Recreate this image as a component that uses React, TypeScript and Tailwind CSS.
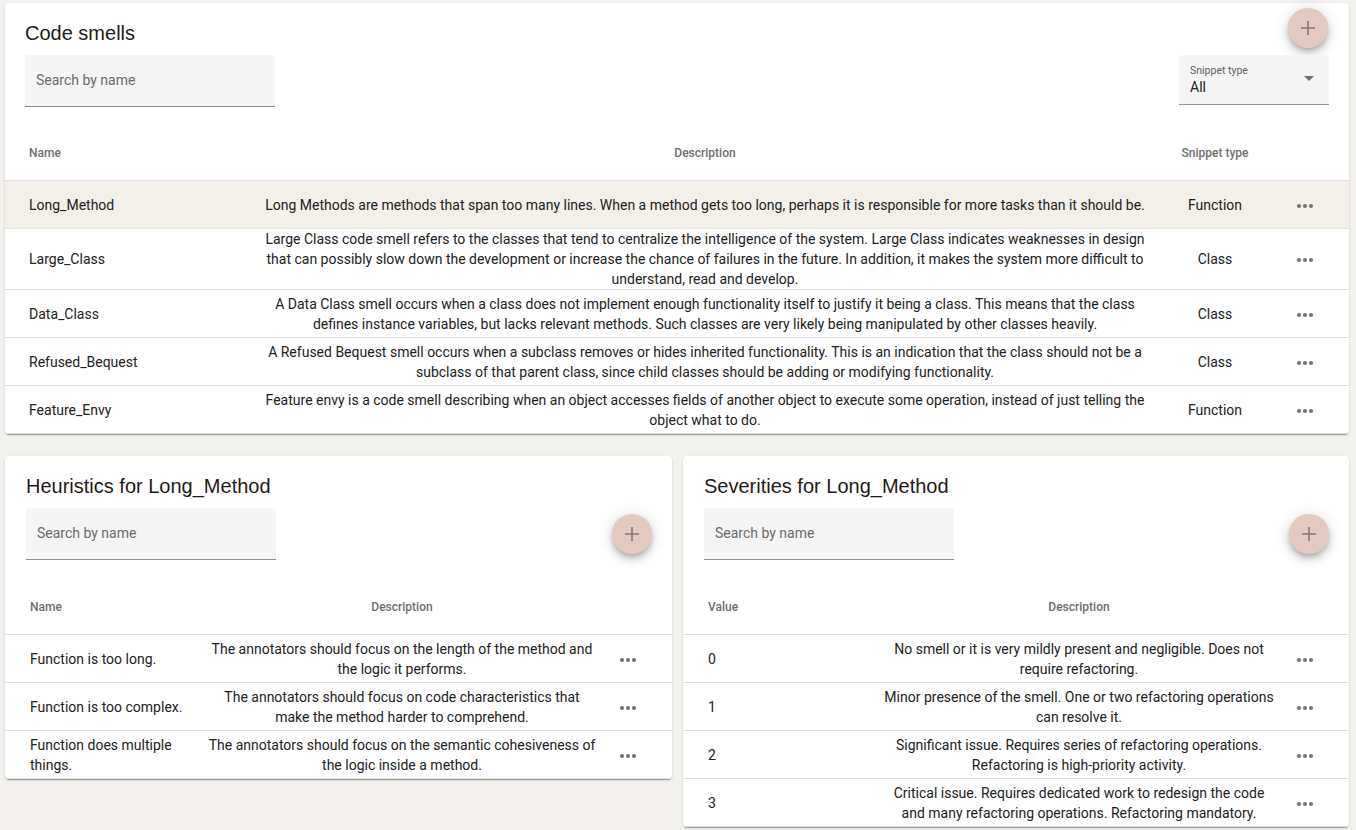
import React from 'react';

type Smell = { name: string; description: string; type: string };
type Row = { key: string; description: string };

const smells: Smell[] = [
  {
    name: 'Long_Method',
    description:
      'Long Methods are methods that span too many lines. When a method gets too long, perhaps it is responsible for more tasks than it should be.',
    type: 'Function',
  },
  {
    name: 'Large_Class',
    description:
      'Large Class code smell refers to the classes that tend to centralize the intelligence of the system. Large Class indicates weaknesses in design that can possibly slow down the development or increase the chance of failures in the future. In addition, it makes the system more difficult to understand, read and develop.',
    type: 'Class',
  },
  {
    name: 'Data_Class',
    description:
      'A Data Class smell occurs when a class does not implement enough functionality itself to justify it being a class. This means that the class defines instance variables, but lacks relevant methods. Such classes are very likely being manipulated by other classes heavily.',
    type: 'Class',
  },
  {
    name: 'Refused_Bequest',
    description:
      'A Refused Bequest smell occurs when a subclass removes or hides inherited functionality. This is an indication that the class should not be a subclass of that parent class, since child classes should be adding or modifying functionality.',
    type: 'Class',
  },
  {
    name: 'Feature_Envy',
    description:
      'Feature envy is a code smell describing when an object accesses fields of another object to execute some operation, instead of just telling the object what to do.',
    type: 'Function',
  },
];

const heuristics: Row[] = [
  { key: 'Function is too long.', description: 'The annotators should focus on the length of the method and the logic it performs.' },
  { key: 'Function is too complex.', description: 'The annotators should focus on code characteristics that make the method harder to comprehend.' },
  { key: 'Function does multiple things.', description: 'The annotators should focus on the semantic cohesiveness of the logic inside a method.' },
];

const severities: Row[] = [
  { key: '0', description: 'No smell or it is very mildly present and negligible. Does not require refactoring.' },
  { key: '1', description: 'Minor presence of the smell. One or two refactoring operations can resolve it.' },
  { key: '2', description: 'Significant issue. Requires series of refactoring operations. Refactoring is high-priority activity.' },
  { key: '3', description: 'Critical issue. Requires dedicated work to redesign the code and many refactoring operations. Refactoring mandatory.' },
];

const paper =
  'bg-white rounded-[4px] shadow-[0px_2px_1px_-1px_rgba(0,0,0,0.2),0px_1px_1px_0px_rgba(0,0,0,0.14),0px_1px_3px_0px_rgba(0,0,0,0.12)]';

const Dots = () => (
  <svg width="18" height="6" viewBox="0 0 18 6" className="text-[#7d716c]" aria-hidden>
    <circle cx="3" cy="3" r="2.1" fill="currentColor" />
    <circle cx="9" cy="3" r="2.1" fill="currentColor" />
    <circle cx="15" cy="3" r="2.1" fill="currentColor" />
  </svg>
);

const Fab = () => (
  <button className="w-10 h-10 rounded-full bg-[#e2cac1] flex items-center justify-center shadow-[0px_3px_5px_-1px_rgba(0,0,0,0.2),0px_6px_10px_0px_rgba(0,0,0,0.14),0px_1px_18px_0px_rgba(0,0,0,0.12)]">
    <svg width="16" height="16" viewBox="0 0 16 16" aria-hidden>
      <path d="M8 1v14M1 8h14" stroke="#8b7570" strokeWidth="1.6" />
    </svg>
  </button>
);

const Search = () => (
  <div className="w-[250px] h-[52px] bg-[#f5f5f5] rounded-t-[4px] border-b border-[#8f8f8f] flex items-center pl-[11px] text-[14px] text-[#6b6b6b]">
    Search by name
  </div>
);

const Title = ({ children }: { children: React.ReactNode }) => (
  <h2 className="text-[20px] leading-[28px] text-[#1f1a17] font-['Liberation_Sans',Arial,sans-serif]">{children}</h2>
);

function SmellsCard() {
  return (
    <div className={`${paper} w-[1344px]`}>
      <div className="flex justify-between">
        <div className="pl-5 pt-4">
          <Title>Code smells</Title>
          <div className="mt-2">
            <Search />
          </div>
        </div>
        <div className="pr-5 pt-[5px] flex flex-col items-end">
          <div className="mr-px">
            <Fab />
          </div>
          <div className="mt-[7px] w-[150px] h-[50px] bg-[#f5f5f5] rounded-t-[4px] border-b border-[#8f8f8f] relative pl-[11px] pt-[10px]">
            <div className="text-[10.5px] leading-[12px] text-[#5f5f5f]">Snippet type</div>
            <div className="text-[14px] leading-[20px] text-[#212121]">All</div>
            <svg width="10" height="5" viewBox="0 0 10 5" className="absolute right-[15px] top-[21px]" aria-hidden>
              <path d="M0 0l5 5 5-5z" fill="#6f6f6f" />
            </svg>
          </div>
        </div>
      </div>

      <div className="mt-[18px]">
        <div className="grid grid-cols-[250px_900px_120px_60px] h-14 items-center border-b border-[#e0e0e0] text-[12px] font-medium text-[#6e6e6e]">
          <div className="pl-6">Name</div>
          <div className="text-center">Description</div>
          <div className="text-center">Snippet type</div>
          <div />
        </div>
        {smells.map((s, i) => (
          <div
            key={s.name}
            className={`grid grid-cols-[250px_900px_120px_60px] min-h-[48px] items-center border-b border-[#e0e0e0] text-[14px] leading-[20px] text-[#212121] ${
              i === 0 ? 'bg-[#f3f0ea]' : ''
            }`}
          >
            <div className="pl-6">{s.name}</div>
            <div className="text-center px-[5px]">{s.description}</div>
            <div className="text-center">{s.type}</div>
            <div className="flex justify-center pt-[2px]">
              <Dots />
            </div>
          </div>
        ))}
      </div>
    </div>
  );
}

function DetailCard({
  title,
  keyLabel,
  rows,
  width,
  keyCol,
}: {
  title: string;
  keyLabel: string;
  rows: Row[];
  width: string;
  keyCol: string;
}) {
  const cols = keyCol === 'narrow' ? 'grid-cols-[185px_424px_28px_30px]' : 'grid-cols-[184px_424px_28px_30px]';
  return (
    <div className={`${paper} ${width}`}>
      <div className="flex justify-between items-end pl-[21px] pr-5">
        <div className="pt-4">
          <Title>{title}</Title>
          <div className="mt-[8px]">
            <Search />
          </div>
        </div>
        <div className="mb-[6px]">
          <Fab />
        </div>
      </div>
      <div className="mt-[19px]">
        <div className={`grid ${cols} h-14 items-center border-b border-[#e0e0e0] text-[12px] font-medium text-[#6e6e6e]`}>
          <div className="pl-[25px]">{keyLabel}</div>
          <div className="text-center">Description</div>
          <div />
          <div />
        </div>
        {rows.map((r) => (
          <div
            key={r.key}
            className={`grid ${cols} min-h-[48px] items-center border-b border-[#e0e0e0] text-[14px] leading-[20px] text-[#212121]`}
          >
            <div className="pl-[25px] pr-[2px]">{r.key}</div>
            <div className="text-center px-4">{r.description}</div>
            <div className="flex justify-center pt-[2px]">
              <Dots />
            </div>
            <div />
          </div>
        ))}
      </div>
    </div>
  );
}

export default function App() {
  return (
    <div className="min-h-[830px] bg-[#f4f2ee] pl-[5px] pt-[3px] font-['Roboto',sans-serif] overflow-hidden">
      <SmellsCard />
      <div className="flex items-start gap-[11px] mt-[22px]">
        <DetailCard
          title="Heuristics for Long_Method"
          keyLabel="Name"
          rows={heuristics}
          width="w-[667px]"
          keyCol="narrow"
        />
        <DetailCard
          title="Severities for Long_Method"
          keyLabel="Value"
          rows={severities}
          width="w-[666px]"
          keyCol="wide"
        />
      </div>
    </div>
  );
}
